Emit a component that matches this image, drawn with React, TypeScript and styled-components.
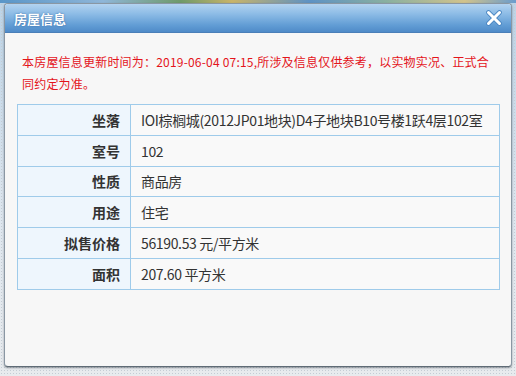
import React from "react";
import styled, { createGlobalStyle } from "styled-components";

const GlobalStyle = createGlobalStyle`
  html, body {
    margin: 0;
    padding: 0;
  }
  body {
    font-family: "Noto Sans CJK SC", "Noto Sans", sans-serif;
    background:
      linear-gradient(to right, #5a96c8 0, #8fb6d8 20%, #6f9a6a 35%, #c9b46a 45%, #5e92c4 60%, #8ab0a0 75%, #d2c38c 90%, #6a9ccd 100%) top / 100% 3px no-repeat,
      radial-gradient(circle, #c4ccd4 0.8px, transparent 1px) 0 0 / 3px 3px,
      linear-gradient(to bottom, #bcd3e6 0, #dfe7ef 60%, #e8ebee 100%);
  }
`;

const Page = styled.div`
  height: 376px;
  box-sizing: border-box;
  padding: 3px 4px 9px 4px;
  display: flex;
  flex-direction: column;
`;

const Dialog = styled.div`
  flex: 1;
  display: flex;
  flex-direction: column;
  border: 1px solid #8a97a3;
  border-bottom-color: #5f6b76;
  border-radius: 4px;
  background: #f7f7f7;
  overflow: hidden;
  box-shadow: 0 1px 2px rgba(50, 60, 70, 0.5);
`;

const Header = styled.div`
  height: 28px;
  flex-shrink: 0;
  display: flex;
  align-items: center;
  justify-content: space-between;
  padding: 0 9px 0 9px;
  background: linear-gradient(to bottom, #b3d3f0 0%, #8dbce6 35%, #629dd5 75%, #4f8bc8 100%);
  border-bottom: 1px solid #4a7fb8;
`;

const Title = styled.div`
  color: #ffffff;
  font-size: 13px;
  font-weight: bold;
  text-shadow: 0 0 2px rgba(40, 90, 150, 0.8);
`;

const CloseButton = styled.button`
  width: 16px;
  height: 16px;
  padding: 0;
  border: none;
  background: transparent;
  display: flex;
  align-items: center;
  justify-content: center;
  cursor: pointer;
`;

const Body = styled.div`
  padding: 18px 11px 0 12px;
`;

const Notice = styled.p`
  margin: 0 0 9px 0;
  padding: 0 5px;
  color: #e4141b;
  font-size: 12px;
  line-height: 22px;
  letter-spacing: 0.2px;
`;

const InfoTable = styled.table`
  width: 100%;
  border-collapse: collapse;
  font-size: 14px;
  color: #333333;
`;

const LabelCell = styled.th`
  width: 113px;
  height: 29.8px;
  padding: 0 10px 0 0;
  box-sizing: border-box;
  text-align: right;
  font-weight: bold;
  background: #eef6fd;
  border: 1px solid #9fcbea;
`;

const ValueCell = styled.td`
  height: 29.8px;
  padding: 0 0 0 10px;
  text-align: left;
  background: #f9f9f9;
  border: 1px solid #9fcbea;
  white-space: nowrap;
  letter-spacing: -0.35px;
`;

const CloseIcon = () => (
  <svg width="16" height="16" viewBox="0 0 16 16">
    <path d="M2.5 2.5 L13.5 13.5 M13.5 2.5 L2.5 13.5" stroke="#4a86c2" strokeWidth="4.6" strokeLinecap="round" />
    <path d="M2.5 2.5 L13.5 13.5 M13.5 2.5 L2.5 13.5" stroke="#ffffff" strokeWidth="3" strokeLinecap="round" />
  </svg>
);

const rows: { label: string; value: string }[] = [
  { label: "坐落", value: "IOI棕榈城(2012JP01地块)D4子地块B10号楼1跃4层102室" },
  { label: "室号", value: "102" },
  { label: "性质", value: "商品房" },
  { label: "用途", value: "住宅" },
  { label: "拟售价格", value: "56190.53 元/平方米" },
  { label: "面积", value: "207.60 平方米" },
];

export default function App() {
  return (
    <>
      <GlobalStyle />
      <Page>
        <Dialog>
          <Header>
            <Title>房屋信息</Title>
            <CloseButton aria-label="关闭">
              <CloseIcon />
            </CloseButton>
          </Header>
          <Body>
            <Notice>
              本房屋信息更新时间为：2019-06-04 07:15,所涉及信息仅供参考，以实物实况、正式合同约定为准。
            </Notice>
            <InfoTable>
              <tbody>
                {rows.map((r) => (
                  <tr key={r.label}>
                    <LabelCell>{r.label}</LabelCell>
                    <ValueCell>{r.value}</ValueCell>
                  </tr>
                ))}
              </tbody>
            </InfoTable>
          </Body>
        </Dialog>
      </Page>
    </>
  );
}
